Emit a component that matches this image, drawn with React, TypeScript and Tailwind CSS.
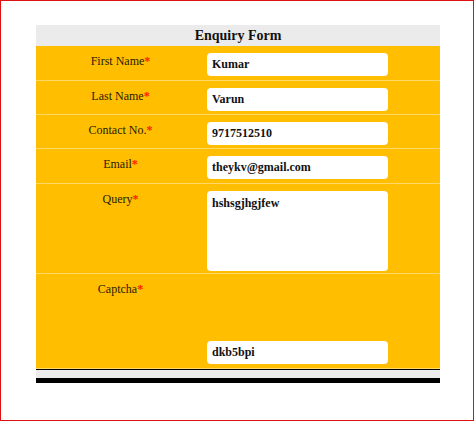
import React from "react";

type Field = { label: string; value: string; kind?: "text" | "area" | "captcha" };

const FIELDS: Field[] = [
  { label: "First Name", value: "Kumar" },
  { label: "Last Name", value: "Varun" },
  { label: "Contact No.", value: "9717512510" },
  { label: "Email", value: "theykv@gmail.com" },
  { label: "Query", value: "hshsgjhgjfew", kind: "area" },
  { label: "Captcha", value: "dkb5bpi", kind: "captcha" },
];

const ROW_H: Record<string, string> = {
  "First Name": "h-[34px]",
  "Last Name": "h-[33px]",
  "Contact No.": "h-[33px]",
  Email: "h-[34px]",
  Query: "h-[89px]",
  Captcha: "h-[94px]",
};

function Label({ text }: { text: string }) {
  return (
    <div className="w-[169px] shrink-0 pt-[8px] text-center text-[12px] leading-[14px] text-[#2a1a00]">
      {text}
      <span className="text-[#ff1a00] font-bold">*</span>
    </div>
  );
}

export default function App() {
  return (
    <div
      className="w-[474px] h-[421px] border border-[#dd1111] bg-white pl-[35px] pt-[24px]"
      style={{ fontFamily: '"Liberation Serif", "Times New Roman", serif' }}
    >
      <div className="w-[404px]">
        {/* header */}
        <div className="h-[21px] bg-[#ebebeb] text-center text-[14px] leading-[21px] font-bold text-[#111]">
          Enquiry Form
        </div>

        {FIELDS.map((f, i) => (
          <div key={f.label}>
            {i > 0 && <div className="h-[1px] bg-[#ffd868]" />}
            <div className={`flex bg-[#ffbf00] ${ROW_H[f.label]}`}>
              <Label text={f.label} />
              <div
                className={`ml-[2px] flex flex-col ${
                  f.kind === "captcha" ? "justify-end pb-[4px]" : "pt-[7px]"
                }`}
              >
                {f.kind === "area" ? (
                  <textarea
                    defaultValue={f.value}
                    readOnly
                    className="w-[181px] h-[80px] resize-none rounded-[4px] bg-white px-[5px] pt-[5px] text-[12px] leading-[14px] font-bold text-[#111] outline-none"
                  />
                ) : (
                  <input
                    defaultValue={f.value}
                    readOnly
                    className="w-[181px] h-[23px] rounded-[4px] bg-white px-[5px] text-[12px] font-bold text-[#111] outline-none"
                  />
                )}
              </div>
            </div>
          </div>
        ))}

        {/* footer bars */}
        <div className="h-[1px] bg-[#ffd868]" />
        <div className="h-[1px] bg-black" />
        <div className="h-[8px] bg-[#ececec]" />
        <div className="h-[5px] bg-black" />
      </div>
    </div>
  );
}
